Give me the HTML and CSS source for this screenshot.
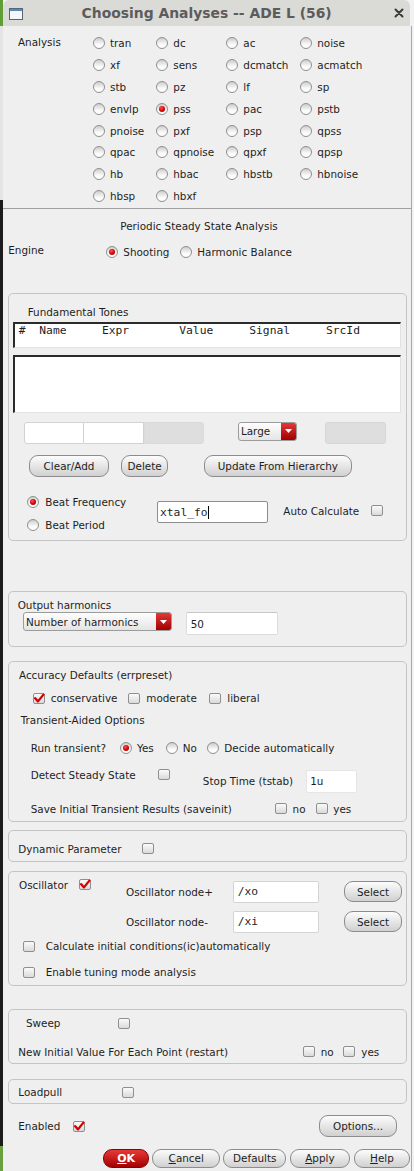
FILE: index.html
```html
<!DOCTYPE html>
<html>
<head>
<meta charset="utf-8">
<title>Choosing Analyses -- ADE L (56)</title>
<link rel="stylesheet" href="styles.css">
</head>
<body>
<div class="page">
  <div class="strip"></div>
  <div class="window">
    <div class="titlebar">
      <svg class="winicon" width="14" height="12" viewBox="0 0 14 12"><rect x="0.5" y="0.5" width="13" height="11" fill="#f5f8fb" stroke="#56657a"/><rect x="1" y="1" width="12" height="2" fill="#5a86c2"/></svg>
      <div class="title">Choosing Analyses -- ADE L (56)</div>
      <svg class="close" width="10" height="10" viewBox="0 0 10 10"><path d="M1.5 1.5 L8.5 8.5 M8.5 1.5 L1.5 8.5" stroke="#3a3a3a" stroke-width="2" stroke-linecap="round"/></svg>
    </div>
    <div class="content">
      <div class="analysis">
        <div class="an-label">Analysis</div>
        <div class="an-grid">
          <div class="opt"><span class="radio"></span>tran</div>
          <div class="opt"><span class="radio"></span>dc</div>
          <div class="opt"><span class="radio"></span>ac</div>
          <div class="opt"><span class="radio"></span>noise</div>
          <div class="opt"><span class="radio"></span>xf</div>
          <div class="opt"><span class="radio"></span>sens</div>
          <div class="opt"><span class="radio"></span>dcmatch</div>
          <div class="opt"><span class="radio"></span>acmatch</div>
          <div class="opt"><span class="radio"></span>stb</div>
          <div class="opt"><span class="radio"></span>pz</div>
          <div class="opt"><span class="radio"></span>lf</div>
          <div class="opt"><span class="radio"></span>sp</div>
          <div class="opt"><span class="radio"></span>envlp</div>
          <div class="opt"><span class="radio on"></span>pss</div>
          <div class="opt"><span class="radio"></span>pac</div>
          <div class="opt"><span class="radio"></span>pstb</div>
          <div class="opt"><span class="radio"></span>pnoise</div>
          <div class="opt"><span class="radio"></span>pxf</div>
          <div class="opt"><span class="radio"></span>psp</div>
          <div class="opt"><span class="radio"></span>qpss</div>
          <div class="opt"><span class="radio"></span>qpac</div>
          <div class="opt"><span class="radio"></span>qpnoise</div>
          <div class="opt"><span class="radio"></span>qpxf</div>
          <div class="opt"><span class="radio"></span>qpsp</div>
          <div class="opt"><span class="radio"></span>hb</div>
          <div class="opt"><span class="radio"></span>hbac</div>
          <div class="opt"><span class="radio"></span>hbstb</div>
          <div class="opt"><span class="radio"></span>hbnoise</div>
          <div class="opt"><span class="radio"></span>hbsp</div>
          <div class="opt"><span class="radio"></span>hbxf</div>
        </div>
      </div>

      <div class="pss-title">Periodic Steady State Analysis</div>
      <div class="engine">
        <div class="engine-label">Engine</div>
        <div class="engine-opts">
          <div class="opt w74"><span class="radio on"></span>Shooting</div>
          <div class="opt"><span class="radio"></span>Harmonic Balance</div>
        </div>
      </div>

      <div class="group ft">
        <div class="ft-label">Fundamental Tones</div>
        <div class="tbl tbl-head">
          <span>#</span><span>Name</span><span>Expr</span><span>Value</span><span>Signal</span><span>SrcId</span>
        </div>
        <div class="tbl tbl-body"></div>
        <div class="fields">
          <div class="fld f1"></div>
          <div class="fld f2"></div>
          <div class="fld f3"></div>
          <div class="combo c-large"><span class="combo-text">Large</span><span class="combo-arrow"><svg width="7" height="4" viewBox="0 0 7 4"><path d="M0 0 H7 L3.5 4 Z" fill="#fff"/></svg></span></div>
          <div class="fld f4"></div>
        </div>
        <div class="btns">
          <div class="btn b-clear">Clear/Add</div>
          <div class="btn b-delete">Delete</div>
          <div class="btn b-update">Update From Hierarchy</div>
        </div>
        <div class="beat">
          <div class="beat-col">
            <div class="opt tall"><span class="radio on"></span>Beat Frequency</div>
            <div class="opt tall"><span class="radio"></span>Beat Period</div>
          </div>
          <div class="fld xfield"><span class="mono">xtal_fo</span><span class="caret"></span></div>
          <div class="auto">Auto Calculate<span class="cbox"></span></div>
        </div>
      </div>

      <div class="group oh">
        <div class="line">Output harmonics</div>
        <div class="oh-row">
          <div class="combo c-wide"><span class="combo-text">Number of harmonics</span><span class="combo-arrow"><svg width="7" height="4" viewBox="0 0 7 4"><path d="M0 0 H7 L3.5 4 Z" fill="#fff"/></svg></span></div>
          <div class="fld f50"><span>50</span></div>
        </div>
      </div>

      <div class="group acc">
        <div class="line">Accuracy Defaults (errpreset)</div>
        <div class="line cb-row">
          <div class="copt w95"><span class="cbox"><svg width="12" height="11" viewBox="0 0 12 11"><path d="M2.2 5.2 L5 8.4 L10.4 1.6" fill="none" stroke="#d40000" stroke-width="2.3" stroke-linecap="round" stroke-linejoin="round"/></svg></span>conservative</div>
          <div class="copt w81"><span class="cbox"></span>moderate</div>
          <div class="copt"><span class="cbox"></span>liberal</div>
        </div>
        <div class="line tao">Transient-Aided Options</div>
        <div class="line run">
          <div class="run-label">Run transient?</div>
          <div class="opt w45"><span class="radio on"></span>Yes</div>
          <div class="opt w41"><span class="radio"></span>No</div>
          <div class="opt"><span class="radio"></span>Decide automatically</div>
        </div>
        <div class="detect">
          <div class="detect-label">Detect Steady State</div>
          <span class="cbox"></span>
          <div class="stop">Stop Time (tstab)</div>
          <div class="fld f1u"><span>1u</span></div>
        </div>
        <div class="line save">
          <div class="save-label">Save Initial Transient Results (saveinit)</div>
          <div class="copt w40"><span class="cbox"></span>no</div>
          <div class="copt"><span class="cbox"></span>yes</div>
        </div>
      </div>

      <div class="group dyn">
        <div class="line">
          <div class="dyn-label">Dynamic Parameter</div>
          <span class="cbox"></span>
        </div>
      </div>

      <div class="group osc">
        <div class="osc-top">
          <div class="osc-left">
            <div class="osc-label">Oscillator</div>
            <span class="cbox"><svg width="12" height="11" viewBox="0 0 12 11"><path d="M2.2 5.2 L5 8.4 L10.4 1.6" fill="none" stroke="#d40000" stroke-width="2.3" stroke-linecap="round" stroke-linejoin="round"/></svg></span>
          </div>
          <div class="osc-grid">
            <div>Oscillator node+</div>
            <div class="fld fnode"><span class="mono">/xo</span></div>
            <div class="btn b-select">Select</div>
            <div>Oscillator node-</div>
            <div class="fld fnode"><span class="mono">/xi</span></div>
            <div class="btn b-select">Select</div>
          </div>
        </div>
        <div class="line osc-c1"><span class="cbox"></span>Calculate initial conditions(ic)automatically</div>
        <div class="line osc-c2"><span class="cbox"></span>Enable tuning mode analysis</div>
      </div>

      <div class="group sweep">
        <div class="line sw1">
          <div class="sw-label">Sweep</div>
          <span class="cbox"></span>
        </div>
        <div class="line sw2">
          <div class="sw2-label">New Initial Value For Each Point (restart)</div>
          <div class="copt w40"><span class="cbox"></span>no</div>
          <div class="copt"><span class="cbox"></span>yes</div>
        </div>
      </div>

      <div class="group lp">
        <div class="line">
          <div class="lp-label">Loadpull</div>
          <span class="cbox"></span>
        </div>
      </div>

      <div class="enabled">
        <div class="en-label">Enabled</div>
        <span class="cbox"><svg width="12" height="11" viewBox="0 0 12 11"><path d="M2.2 5.2 L5 8.4 L10.4 1.6" fill="none" stroke="#d40000" stroke-width="2.3" stroke-linecap="round" stroke-linejoin="round"/></svg></span>
        <div class="btn b-options">Options...</div>
      </div>

      <div class="footer">
        <div class="btn b-ok"><span><u>O</u>K</span></div>
        <div class="btn b-cancel"><span><u>C</u>ancel</span></div>
        <div class="btn b-defaults">Defaults</div>
        <div class="btn b-apply"><span><u>A</u>pply</span></div>
        <div class="btn b-help"><span><u>H</u>elp</span></div>
      </div>
    </div>
  </div>
</div>
</body>
</html>
```

FILE: styles.css
```css
* { box-sizing: border-box; margin: 0; padding: 0; }
html, body { width: 414px; height: 1171px; overflow: hidden; }
body {
  font-family: "DejaVu Sans", sans-serif;
  font-size: 10.4px;
  color: #1e1e1e;
  background: #f2f2f2;
}
.page { display: flex; height: 1171px; }
.strip {
  width: 3px; flex: none;
  background: linear-gradient(to bottom, #5f9e35 0, #5f9e35 26px, #e4e4e4 26px, #e4e4e4 200px, #1c1c1c 200px, #1c1c1c 1146px, #6aa040 1146px, #6aa040 1171px);
}
.window { width: 409px; flex: none; }

.titlebar {
  width: 407px; height: 26px;
  background: #dadad6;
  border-radius: 6px 6px 0 0;
  display: grid;
  grid-template-columns: 1fr auto 1fr;
  align-items: center;
  padding: 0 6px 0 6.3px;
}
.winicon { display: block; margin-top: 1px; }
.title { font-weight: bold; font-size: 13.9px; color: #5c5c5c; white-space: nowrap; }
.close { justify-self: end; display: block; }

.content {
  background: #efefef;
  border-right: 1px solid #a8a8a8;
  height: 1145px;
}

/* radios / checkboxes */
.opt { display: flex; align-items: center; gap: 5.3px; white-space: nowrap; }
.radio {
  width: 12px; height: 12px; flex: none;
  border-radius: 50%;
  border: 1px solid #8f8f8f;
  background: linear-gradient(#cdcdcd, #fbfbfb 65%, #ffffff);
  display: flex; align-items: center; justify-content: center;
}
.radio.on::after {
  content: "";
  width: 6px; height: 6px; border-radius: 50%;
  background: radial-gradient(circle at 40% 35%, #ff5050, #cc0000 55%, #8e0000);
}
.cbox {
  width: 12px; height: 11px; flex: none;
  border: 1px solid #8f8f8f;
  border-radius: 2px;
  background: linear-gradient(#fafafa, #dadada);
  display: flex; align-items: center; justify-content: center;
  overflow: visible;
}
.cbox svg { display: block; flex: none; }
.copt { display: flex; align-items: center; gap: 6px; white-space: nowrap; }
.line { display: flex; align-items: center; height: 14px; line-height: 14px; white-space: nowrap; }

/* analysis */
.analysis {
  display: flex;
  height: 183px;
  padding: 6px 0 0 15px;
  border-bottom: 1px solid #a0a0a0;
}
.an-label { width: 74.7px; line-height: 21.9px; }
.an-grid {
  display: grid;
  grid-template-columns: 63.3px 70px 74px 1fr;
  grid-auto-rows: 21.9px;
}

.pss-title { margin-top: 10.4px; line-height: 14px; text-align: center; padding-right: 16px; }
.engine { display: flex; margin-top: 9.3px; padding-left: 5.3px; line-height: 14px; }
.engine-label { width: 97.7px; }
.engine-opts { display: flex; margin-top: 2.7px; }
.w74 { width: 74px; }

/* groups */
.group {
  margin-left: 5.3px;
  width: 398.4px;
  border: 1px solid #c4c4c4;
  border-radius: 5px;
}
.ft { margin-top: 33.6px; height: 248px; padding: 11.1px 4.7px 0 4px; }
.ft-label { line-height: 14px; padding-left: 14.4px; }
.tbl {
  background: #fff;
  border-top: 2px solid #2b2b2b;
  border-left: 2px solid #2b2b2b;
  border-right: 1px solid #e2e2e2;
  border-bottom: 1px solid #e2e2e2;
}
.tbl-head {
  margin-top: 2.6px;
  height: 26px;
  display: grid;
  grid-template-columns: 20.6px 62.7px 77.3px 70px 76.7px 1fr;
  padding-left: 3.4px;
  font-family: "DejaVu Sans Mono", monospace;
  font-size: 11.3px;
  line-height: 14px;
  align-content: start;
}
.tbl-body { margin-top: 7.3px; height: 57.7px; }

.fld {
  background: #fff;
  border: 1px solid #d2d2d2;
  display: flex; align-items: center;
  flex: none;
}
.mono { font-family: "DejaVu Sans Mono", monospace; font-size: 11.3px; }
.fields { display: flex; align-items: flex-start; margin-top: 9.6px; padding-left: 11px; }
.f1 { width: 60px; height: 22px; border-radius: 3px 0 0 3px; }
.f2 { width: 59.3px; height: 22px; border-left: none; }
.f3 { width: 60px; height: 22px; background: #dedede; border-color: #dadada; border-radius: 0 3px 3px 0; }
.f4 { margin-left: 28.3px; width: 60.7px; height: 22px; background: #dedede; border-color: #d6d6d6; border-radius: 3px; }

.combo {
  display: flex;
  flex: none;
  border: 1px solid #9c9c9c;
  border-radius: 3px;
  background: linear-gradient(#fefefe, #e4e4e4);
  overflow: hidden;
}
.combo-text { flex: 1; display: flex; align-items: center; padding-left: 1.7px; white-space: nowrap; }
.combo-arrow {
  width: 15.4px; flex: none;
  background: linear-gradient(#e23838, #a30000);
  display: flex; align-items: center; justify-content: center;
}
.combo-arrow svg { display: block; }
.c-large { margin-left: 34.7px; width: 58.7px; height: 18.4px; }
.c-wide { width: 149px; height: 18.7px; }

.btn {
  border: 1px solid #8c8c8c;
  border-radius: 9px;
  background: linear-gradient(#fcfcfc, #d0d0d0);
  display: flex; align-items: center; justify-content: center;
  white-space: nowrap;
  flex: none;
}
.btns { display: flex; margin-top: 10.7px; padding-left: 16px; }
.btns .btn { height: 21.7px; }
.b-clear { width: 79.4px; }
.b-delete { margin-left: 12.3px; width: 47.3px; }
.b-update { margin-left: 35.7px; width: 147.7px; }

.beat { display: flex; align-items: flex-start; margin-top: 14.3px; padding-left: 14px; }
.beat-col { width: 129.4px; flex: none; }
.opt.tall { height: 23px; gap: 6px; }
.xfield {
  margin-top: 10px; width: 111px; height: 22.3px;
  border-color: #8c8c8c; border-radius: 2px;
  padding-left: 2.3px;
}
.caret { display: inline-block; width: 1px; height: 13px; background: #000; margin-left: 0.5px; }
.auto { margin-left: 15.6px; margin-top: 13px; line-height: 14px; display: flex; align-items: center; gap: 11.7px; white-space: nowrap; }

/* output harmonics */
.oh { margin-top: 49.7px; height: 56px; padding: 5.9px 0 0 8.4px; }
.oh-row { display: flex; align-items: flex-start; margin-top: 0.7px; padding-left: 5.6px; }
.f50 { margin-left: 13.4px; width: 92px; height: 22.7px; padding-left: 4px; border-color: #dcdcdc; border-top-color: #c8c8c8; border-radius: 2px; }

/* accuracy */
.acc { margin-top: 14px; height: 161px; padding: 6px 0 0 9.7px; }
.cb-row { margin-top: 9.6px; padding-left: 13.7px; }
.w95 { width: 95.6px; flex: none; }
.w81 { width: 81px; flex: none; }
.tao { margin-top: 7.4px; padding-left: 1.7px; }
.run { margin-top: 14.3px; padding-left: 11.7px; }
.run-label { width: 89.3px; flex: none; }
.run .opt { gap: 5px; }
.w45 { width: 45.7px; flex: none; }
.w41 { width: 41.6px; flex: none; }
.detect { display: flex; align-items: flex-start; margin-top: 13.4px; padding-left: 11.7px; line-height: 14px; white-space: nowrap; }
.detect-label { width: 127.6px; flex: none; }
.detect .cbox { margin-top: 0.6px; }
.stop { margin-left: 32.6px; margin-top: 6px; width: 102.7px; flex: none; }
.f1u { margin-top: 1.6px; width: 51.3px; height: 22.7px; padding-left: 3.7px; border-color: #e6e6e6; border-radius: 2px; }
.save { margin-top: 9.3px; padding-left: 11.7px; }
.save-label { width: 244.3px; flex: none; }
.save .copt { gap: 5.6px; }
.w40 { width: 40.7px; flex: none; }

/* dynamic */
.dyn { margin-top: 8.3px; height: 31.7px; padding: 11px 0 0 9px; }
.dyn-label { width: 123.4px; flex: none; }

/* oscillator */
.osc { margin-top: 9px; height: 115px; padding: 6px 0 0 9.7px; }
.osc-top { display: flex; align-items: flex-start; }
.osc-left { width: 107px; flex: none; display: flex; align-items: flex-start; line-height: 14px; }
.osc-label { width: 60.3px; flex: none; }
.osc-left .cbox { margin-top: 1.6px; }
.osc-grid {
  margin-top: 3px;
  flex: none;
  display: grid;
  grid-template-columns: 107.3px 86px 82.4px;
  row-gap: 8px;
  grid-auto-rows: 22px;
  align-items: center;
  white-space: nowrap;
}
.fnode { height: 22px; padding-left: 3.4px; border-color: #d4d4d4; border-radius: 2px; }
.b-select { height: 20.6px; width: 57.4px; justify-self: end; }
.osc-c1 { margin-top: 6.8px; padding-left: 3.7px; gap: 11px; }
.osc-c2 { margin-top: 11.8px; padding-left: 3.7px; gap: 11px; }

/* sweep */
.sweep { margin-top: 23.3px; height: 55px; padding: 6.3px 0 0 0; }
.sw1 { padding-left: 16.7px; }
.sw-label { width: 92.3px; flex: none; }
.sw2 { margin-top: 14.7px; padding-left: 9px; }
.sw2-label { width: 284.4px; flex: none; }
.sw2 .w40 { width: 40.6px; }

/* loadpull */
.lp { margin-top: 15px; height: 25px; padding: 5.3px 0 0 9px; }
.lp-label { width: 103.4px; flex: none; }

/* enabled row */
.enabled { display: flex; align-items: center; margin-top: 11px; padding-left: 15.3px; padding-right: 14.3px; height: 22.3px; }
.en-label { width: 54.4px; flex: none; }
.b-options { margin-left: auto; width: 77.4px; height: 22.3px; }

/* footer */
.footer { display: flex; gap: 3.4px; margin-top: 12px; padding-left: 100.3px; }
.footer .btn { height: 18.4px; }
.b-ok {
  width: 45.7px;
  background: linear-gradient(#e63a3a, #a40000);
  border-color: #8a0000;
  color: #fff;
  font-weight: bold;
  font-size: 11px;
}
.b-cancel { width: 67.7px; }
.b-defaults { width: 62.7px; }
.b-apply { width: 60.7px; }
.b-help { width: 56.7px; }
```
